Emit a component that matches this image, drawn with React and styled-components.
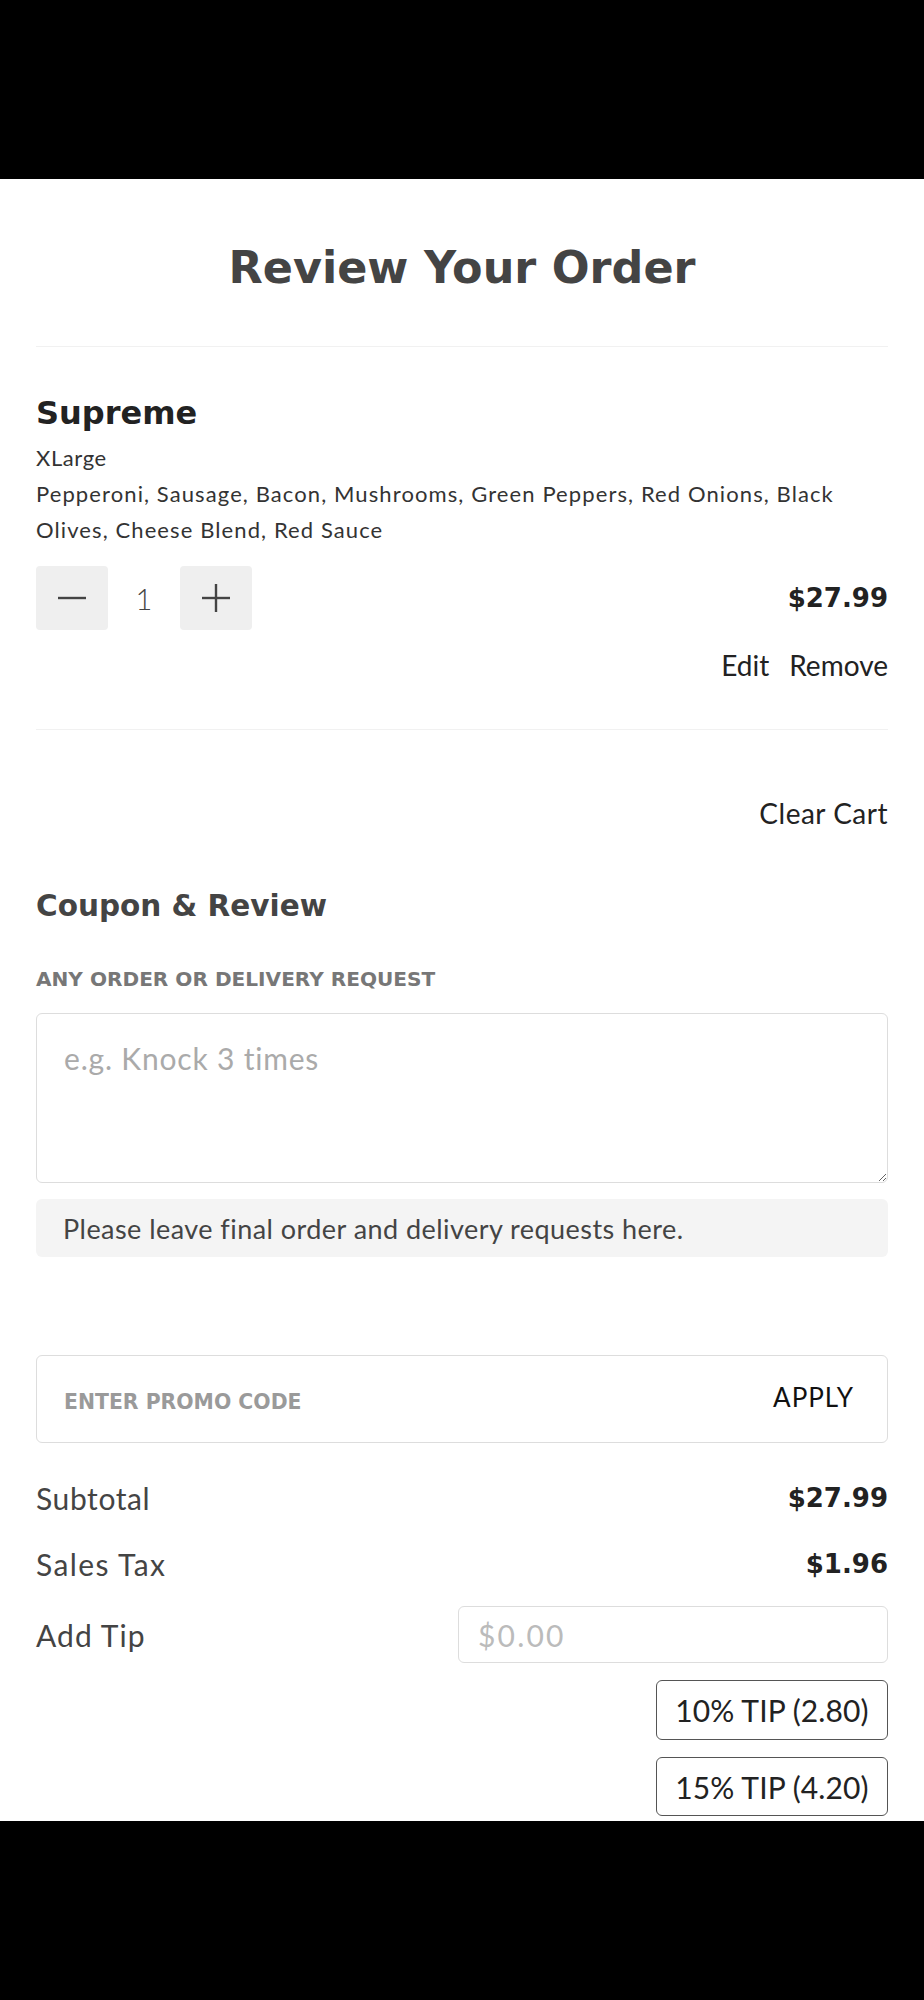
import React from "react";
import styled, { createGlobalStyle } from "styled-components";

const HEAVY = `"DejaVu Sans", "Noto Sans", sans-serif`;

const GlobalStyle = createGlobalStyle`
  html, body { margin: 0; padding: 0; background: #000; }
  body { font-family: Lato, "Noto Sans", sans-serif; color: #333; }
  * { box-sizing: border-box; }
`;

const StatusArea = styled.div`
  height: 179px;
  background: #000;
`;

const NavArea = styled.div`
  height: 179px;
  background: #000;
`;

const Screen = styled.main`
  height: 1642px;
  overflow: hidden;
  background: #fff;
  padding: 63px 36px 0;
  display: flex;
  flex-direction: column;
`;

const Title = styled.h1`
  margin: 0;
  text-align: center;
  font-family: ${HEAVY};
  font-size: 44.5px;
  line-height: 52px;
  font-weight: 700;
  color: #444;
`;

const Divider = styled.hr`
  margin: ${(p) => p.$top}px 0 0;
  border: 0;
  height: 1px;
  background: #f1f1f1;
`;

const ItemName = styled.h2`
  margin: 48px 0 0;
  font-family: ${HEAVY};
  font-size: 32px;
  line-height: 36px;
  font-weight: 700;
  color: #222;
`;

const ItemDetail = styled.p`
  margin: ${(p) => p.$top || 0}px 0 0;
  font-size: 22px;
  line-height: 36px;
  letter-spacing: ${(p) => p.$ls ?? 1.1}px;
  color: #333;
`;

const QtyRow = styled.div`
  margin-top: 18px;
  display: flex;
  align-items: center;
  justify-content: space-between;
`;

const Stepper = styled.div`
  display: flex;
  align-items: center;
`;

const StepButton = styled.button`
  width: 72px;
  height: 64px;
  border: 0;
  border-radius: 4px;
  background: #efefef;
  display: flex;
  align-items: center;
  justify-content: center;
  padding: 0;
`;

const QtyValue = styled.span`
  width: 72px;
  text-align: center;
  font-size: 29px;
  font-weight: 300;
  color: #444;
`;

const Price = styled.span`
  font-family: ${HEAVY};
  font-size: 26px;
  font-weight: 700;
  color: #222;
`;

const ActionRow = styled.div`
  margin-top: 20px;
  display: flex;
  justify-content: flex-end;
  gap: 20px;
  font-size: 28px;
  line-height: 30px;
  color: #222;
`;

const LinkText = styled.span`
  cursor: pointer;
`;

const ClearRow = styled.div`
  margin-top: 68px;
  display: flex;
  justify-content: flex-end;
  font-size: 28px;
  line-height: 30px;
  letter-spacing: 0.5px;
  color: #222;
`;

const SectionTitle = styled.h3`
  margin: 60px 0 0;
  font-family: ${HEAVY};
  font-size: 29.5px;
  line-height: 36px;
  font-weight: 700;
  color: #444;
`;

const FieldLabel = styled.label`
  margin-top: 43px;
  display: block;
  font-family: ${HEAVY};
  font-size: 20.1px;
  line-height: 24px;
  font-weight: 700;
  color: #777;
  text-transform: uppercase;
`;

const Notes = styled.textarea`
  margin-top: 22px;
  width: 100%;
  height: 170px;
  border: 1px solid #ddd;
  border-radius: 6px;
  padding: 26px 27px;
  font-family: inherit;
  font-size: 30px;
  line-height: 36px;
  letter-spacing: 0.8px;
  color: #333;
  resize: vertical;
  outline: none;
  &::placeholder { color: #aaa; }
`;

const InfoBox = styled.div`
  margin-top: 16px;
  height: 58px;
  border-radius: 6px;
  background: #f4f4f4;
  padding: 0 27px;
  display: flex;
  align-items: center;
  font-size: 27px;
  letter-spacing: 0.45px;
  color: #444;
`;

const PromoBox = styled.div`
  margin-top: 98px;
  height: 88px;
  border: 1px solid #ddd;
  border-radius: 6px;
  padding: 0 33px 0 27px;
  display: flex;
  align-items: center;
  justify-content: space-between;
`;

const PromoInput = styled.input`
  border: 0;
  outline: none;
  flex: 1;
  font-family: ${HEAVY};
  font-size: 20.4px;
  font-weight: 700;
  text-transform: uppercase;
  color: #333;
  padding: 6px 0 0;
  &::placeholder { color: #9a9a9a; }
`;

const ApplyButton = styled.button`
  border: 0;
  background: none;
  padding: 0;
  font-family: inherit;
  font-size: 26px;
  letter-spacing: 1px;
  color: #111;
  margin-top: -4px;
`;

const SummaryRow = styled.div`
  margin-top: ${(p) => p.$top}px;
  display: flex;
  align-items: center;
  justify-content: space-between;
  line-height: 40px;
`;

const SummaryLabel = styled.span`
  font-size: 30px;
  letter-spacing: ${(p) => p.$ls || 0.6}px;
  color: #444;
`;

const SummaryValue = styled.span`
  font-family: ${HEAVY};
  font-size: 26px;
  font-weight: 700;
  color: #222;
`;

const TipRow = styled.div`
  margin-top: 22px;
  display: flex;
  align-items: center;
  justify-content: space-between;
`;

const TipInput = styled.input`
  width: 430px;
  height: 57px;
  border: 1px solid #ddd;
  border-radius: 6px;
  padding: 0 19px;
  font-family: inherit;
  font-size: 30px;
  letter-spacing: 2.2px;
  color: #333;
  outline: none;
  &::placeholder { color: #bbb; }
`;

const TipButton = styled.button`
  margin-top: 17px;
  align-self: flex-end;
  width: 232px;
  height: ${(p) => p.$h}px;
  border: 1px solid #555;
  border-radius: 6px;
  background: #fff;
  font-family: inherit;
  font-size: 30px;
  letter-spacing: 0.1px;
  color: #222;
  padding: 0;
`;

const MinusIcon = () => (
  <svg width="28" height="4" viewBox="0 0 28 4">
    <line x1="0" y1="2" x2="28" y2="2" stroke="#444" strokeWidth="2.4" />
  </svg>
);

const PlusIcon = () => (
  <svg width="28" height="28" viewBox="0 0 28 28">
    <line x1="0" y1="14" x2="28" y2="14" stroke="#444" strokeWidth="2.4" />
    <line x1="14" y1="0" x2="14" y2="28" stroke="#444" strokeWidth="2.4" />
  </svg>
);

export default function App() {
  return (
    <>
      <GlobalStyle />
      <StatusArea />
      <Screen>
        <Title>Review Your Order</Title>
        <Divider $top={52} />
        <ItemName>Supreme</ItemName>
        <ItemDetail $top={9} $ls={0.6}>XLarge</ItemDetail>
        <ItemDetail>
          Pepperoni, Sausage, Bacon, Mushrooms, Green Peppers, Red Onions, Black Olives, Cheese Blend, Red Sauce
        </ItemDetail>
        <QtyRow>
          <Stepper>
            <StepButton aria-label="Decrease">
              <MinusIcon />
            </StepButton>
            <QtyValue>1</QtyValue>
            <StepButton aria-label="Increase">
              <PlusIcon />
            </StepButton>
          </Stepper>
          <Price>$27.99</Price>
        </QtyRow>
        <ActionRow>
          <LinkText>Edit</LinkText>
          <LinkText>Remove</LinkText>
        </ActionRow>
        <Divider $top={49} />
        <ClearRow>
          <LinkText>Clear Cart</LinkText>
        </ClearRow>
        <SectionTitle>Coupon &amp; Review</SectionTitle>
        <FieldLabel>Any order or delivery request</FieldLabel>
        <Notes placeholder="e.g. Knock 3 times" />
        <InfoBox>Please leave final order and delivery requests here.</InfoBox>
        <PromoBox>
          <PromoInput placeholder="ENTER PROMO CODE" />
          <ApplyButton>APPLY</ApplyButton>
        </PromoBox>
        <SummaryRow $top={35}>
          <SummaryLabel>Subtotal</SummaryLabel>
          <SummaryValue>$27.99</SummaryValue>
        </SummaryRow>
        <SummaryRow $top={26}>
          <SummaryLabel $ls={1.4}>Sales Tax</SummaryLabel>
          <SummaryValue>$1.96</SummaryValue>
        </SummaryRow>
        <TipRow>
          <SummaryLabel $ls={1.1}>Add Tip</SummaryLabel>
          <TipInput placeholder="$0.00" />
        </TipRow>
        <TipButton $h={60}>10% TIP (2.80)</TipButton>
        <TipButton $h={59}>15% TIP (4.20)</TipButton>
      </Screen>
      <NavArea />
    </>
  );
}
